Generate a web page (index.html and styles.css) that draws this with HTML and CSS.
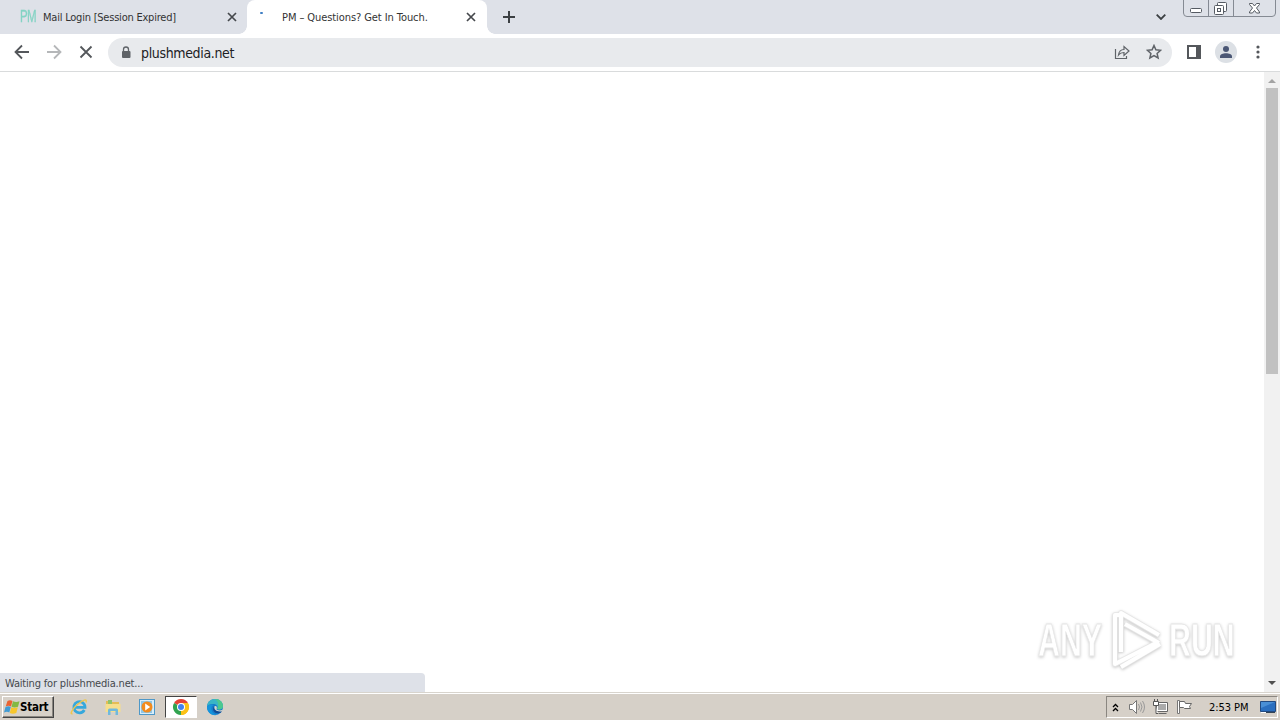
FILE: index.html
```html
<!DOCTYPE html>
<html lang="en">
<head>
  <meta charset="UTF-8" />
  <meta name="viewport" content="width=device-width, initial-scale=1.0" />
  <title>PM – Questions? Get In Touch.</title>
  <link rel="stylesheet" href="styles.css">
</head>
<body>
  <header class="tab-strip">
    <div class="tab">
      <span class="favicon">PM</span>
      <span class="tab-title title-login">Mail Login [Session Expired]</span>
      <svg class="tab-close" viewBox="0 0 10 10"><path d="M1 1l8 8M9 1l-8 8"/></svg>
    </div>
    <div class="tab active">
      <span class="spinner"></span>
      <span class="tab-title title-touch">PM – Questions? Get In Touch.</span>
      <svg class="tab-close" viewBox="0 0 10 10"><path d="M1 1l8 8M9 1l-8 8"/></svg>
    </div>
    <svg class="new-tab" viewBox="0 0 12 12"><path d="M6 0v12M0 6h12"/></svg>
    <svg class="tab-search" viewBox="0 0 10 6"><path d="M.7.7L5 5 9.300.7"/></svg>
    <div class="window-buttons">
      <svg width="97" height="17" viewBox="0 0 97 17">
        <path class="frame" d="M.5 0v13q0 3.500 3.500 3.500h85q3.500 0 3.500-3.500V0M25.500 0v16M50.500 0v16"/>
        <rect class="glyph" x="7.500" y="8.500" width="11" height="4" rx="1"/>
        <path class="glyph" d="M34.500 5.500v-2q0-1 1-1h7q1 0 1 1v7q0 1-1 1h-2"/>
        <rect class="glyph" x="31.500" y="5.500" width="9" height="9" rx="1"/>
        <rect class="glyph" x="34.500" y="8.500" width="3" height="3"/>
        <path class="glyph" d="M66.500 3.500h3l2 2.500 2-2.500h3v1l-3 3.500 3 4v1h-3l-2-2.500-2 2.500h-3v-1l3-4-3-3.500z"/>
      </svg>
    </div>
  </header>

  <nav class="toolbar">
    <svg class="nav-icon" viewBox="0 0 16 16"><path d="M15 8H2M8 1.500L1.500 8 8 14.500"/></svg>
    <svg class="nav-icon disabled" viewBox="0 0 16 16"><path d="M1 8h13M8 1.500L14.500 8 8 14.500"/></svg>
    <svg class="nav-icon" viewBox="0 0 16 16"><path d="M2.500 2.500l11 11M13.500 2.500l-11 11"/></svg>
    <div class="address-bar">
      <svg class="lock" viewBox="0 0 10 13"><path d="M2.500 6V3.500a2.500 2.500 0 0 1 5 0V6" fill="none" stroke="#5f6368" stroke-width="1.300"/><rect x="1" y="5" width="8.500" height="7" rx="1" fill="#5f6368"/></svg>
      <span class="url">plushmedia.net</span>
      <svg class="share" viewBox="0 0 16 16"><path d="M1.500 5v9.500h11V12M4.500 11c.5-4 2.500-5.500 5.500-5.500V2.500L15 7l-5 4.500v-3c-2.500 0-4 .5-5.500 2.500z"/></svg>
      <svg class="star" viewBox="0 0 16 16"><path d="M8 1.500l1.900 4.300 4.700.5-3.500 3.100 1 4.600L8 11.600 3.900 14l1-4.600L1.400 6.300l4.700-.5z"/></svg>
    </div>
    <svg class="side-panel" viewBox="0 0 14 14"><path d="M1 1h12v12H1z" fill="none" stroke="#54575b" stroke-width="2"/><path d="M9 1h4v12H9z" fill="#54575b"/></svg>
    <div class="avatar">
      <svg viewBox="0 0 12 12"><circle cx="6" cy="3" r="3"/><path d="M0 12v-1.500C0 8.500 3 7.300 6 7.300s6 1.200 6 3.200V12z"/></svg>
    </div>
    <svg class="menu" viewBox="0 0 4 14"><circle cx="2" cy="2" r="1.600"/><circle cx="2" cy="7" r="1.600"/><circle cx="2" cy="12" r="1.600"/></svg>
  </nav>

  <main class="page">
    <div class="status-bar">Waiting for plushmedia.net...</div>
    <div class="watermark">
      <span class="word">ANY</span>
      <svg viewBox="0 0 60 66">
        <path class="edge" d="M13 8H9v49l43-22M15 45V6l38 22M19 17l34 19M15 60l39-23"/>
        <path class="face" d="M13 8H9v49l43-22M15 45V6l38 22M19 17l34 19M15 60l39-23"/>
      </svg>
      <span class="word">RUN</span>
    </div>
    <div class="scrollbar">
      <svg class="arrow up" viewBox="0 0 8 4"><path d="M0 4l4-4 4 4z"/></svg>
      <div class="thumb"></div>
      <svg class="arrow down" viewBox="0 0 8 4"><path d="M0 0l4 4 4-4z"/></svg>
    </div>
  </main>

  <footer class="taskbar">
    <div class="start">
      <svg viewBox="0 0 16 16">
        <path d="M3.500 2q2.500-1.500 5 0L7 7.500q-2.500-1.500-5.300 0z" fill="#e96332"/>
        <path d="M9 2.300q3 1.500 6.500 0L14 7.700q-3.500 1.500-6.500 0z" fill="#83b943"/>
        <path d="M1.500 8q3-1.500 5.300 0L5.300 13.500q-2.300-1.500-5.300 0z" fill="#419bd4"/>
        <path d="M7.300 8.300q3 1.500 6.500 0L12.300 14q-3.500 1.500-6.500 0z" fill="#f7c62c"/>
      </svg>
      <span>Start</span>
    </div>
    <div class="quick-launch">
      <div class="app">
        <svg viewBox="0 0 18 18">
          <path d="M14.300 12A5.600 5.600 0 1 1 15 9.300H5" fill="none" stroke="#36a8dc" stroke-width="2.800"/>
          <path d="M2.500 15.500C-1 17 3 10 8 6s9.500-6 8-1.500" fill="none" stroke="#eec64d" stroke-width="1.400"/>
        </svg>
      </div>
      <div class="app">
        <svg viewBox="0 0 18 18">
          <path d="M2 3h5l1 1h7v10H2z" fill="#e4bd55"/>
          <path d="M4 2h4v4H4z" fill="#8ec36b"/>
          <path d="M1.500 6h15v8h-15z" fill="#f6df8c"/>
          <path d="M4 17v-5q0-1.500 1.500-1.500h7q1.500 0 1.500 1.500v5h-2.500v-4h-5v4z" fill="#70b9dc"/>
        </svg>
      </div>
      <div class="app">
        <svg viewBox="0 0 18 18">
          <rect x="1.500" y="1.500" width="15" height="15" fill="#d8edfa" stroke="#4e98c8"/>
          <rect x="3" y="3" width="11" height="12" fill="#8fc6e6"/>
          <circle cx="9" cy="9" r="5.500" fill="#f28b1d"/>
          <path d="M7.200 5.500l5 3.500-5 3.500z" fill="#fff"/>
        </svg>
      </div>
      <div class="app pressed">
        <svg viewBox="0 0 18 18">
          <path d="M9 9L2.070 5A8 8 0 0 1 15.930 5z" fill="#e54335"/>
          <path d="M9 9l6.930-4A8 8 0 0 1 9 17z" fill="#fbc116"/>
          <path d="M9 9v8A8 8 0 0 1 2.070 5z" fill="#31a350"/>
          <path d="M9 5h6.930A8 8 0 0 1 9 17l3.500-6z" fill="#fbc116"/>
          <circle cx="9" cy="9" r="4" fill="#fff"/>
          <circle cx="9" cy="9" r="3" fill="#4382ed"/>
        </svg>
      </div>
      <div class="app">
        <svg viewBox="0 0 18 18">
          <circle cx="9" cy="9" r="8" fill="#167bc9"/>
          <path d="M1 8C2 3 5 1 9 1c5 0 8 3.500 8 7 0 3-3 4-6 3 2-3-1-5-4-5-3 0-5 1-6 2z" fill="#39b5c6"/>
          <path d="M9 1c5 0 8 3.500 8 7 0 3-3 4-6 3 1-2 3-6-2-10z" fill="#4cc88f"/>
          <path d="M6 8c-2 4 1 8 5 9-6 1-10-3-10-8 1-3 5-3 7-2z" fill="#1594dc"/>
          <path d="M8 8c-1 4 3 6 8 5l-1 1.500C10 17 5 13 8 8z" fill="#124b94"/>
          <path d="M8.500 8.300c2-1 3 1 2 3 1 1.500 4 1.500 6.500.2l-.8 1.700c-4.500.8-8.500-.7-7.700-4.900z" fill="#d8d4cb"/>
        </svg>
      </div>
    </div>
    <div class="tray">
      <svg class="chevrons" viewBox="0 0 7 9"><path d="M1 4l2.500-2.500L6 4M1 8l2.500-2.500L6 8"/></svg>
      <svg class="tray-icon" viewBox="0 0 17 16">
        <path d="M1.500 5.500h3l4-4v13l-4-4h-3z" fill="#fff" stroke="#777"/>
        <path d="M10.500 5q2 3 0 6M12.500 3.500q3 4.500 0 9M14.500 2q4 6 0 12" fill="none" stroke="#999"/>
      </svg>
      <svg class="tray-icon" viewBox="0 0 17 16">
        <path d="M4.500 3.500h11v9h-11z" fill="#fff" stroke="#666"/>
        <path d="M6 5h8v6H6z" fill="#aaa"/>
        <path d="M6.500 14.500h8" stroke="#666"/>
        <path d="M1.500 2.500h5v4h-5zM2.500 0v2M5.500 0v2M4 7v7.500h2" fill="#fff" stroke="#555"/>
      </svg>
      <svg class="tray-icon" viewBox="0 0 17 16">
        <path d="M1.500 1.500h2v13h-2z" fill="#fff" stroke="#777"/>
        <path d="M3.500 2.500h5l1 2h6l-2 3 1 2h-6l-1-1h-4z" fill="#fff" stroke="#666"/>
      </svg>
      <span class="clock">2:53 PM</span>
      <svg class="desktop" viewBox="0 0 16 14">
        <path d="M.5 1.500h15v10H.5z" fill="#2b6fbf" stroke="#234a80"/>
        <path d="M1 2h14L1 8z" fill="#4a8fd5"/>
        <path d="M1 12.500h5" stroke="#fff"/>
        <path d="M6 12.500h9" stroke="#345"/>
      </svg>
    </div>
  </footer>
</body>
</html>
```

FILE: styles.css
```css
:root {
  --strip: #dee1e8;
  --grey: #5f6368;
  --taskbar: #d6d0c8;
}

* {
  box-sizing: border-box;
  margin: 0;
  padding: 0;
}

body {
  display: flex;
  flex-direction: column;
  width: 100%;
  height: 100vh;
  overflow: hidden;
  background: #fff;
  color: #333;
  font-family: "DejaVu Sans Condensed", "DejaVu Sans", sans-serif;
  font-stretch: condensed;
  font-size: 11px;
}

svg {
  display: block;
  flex: none;
}

.tab-strip {
  display: flex;
  align-items: center;
  height: 34px;
  background: var(--strip);
}

.tab {
  display: flex;
  align-items: center;
  width: 247px;
  height: 34px;
  padding: 0 10px 0 20px;
}

.tab.active {
  position: relative;
  width: 240px;
  padding: 0 11px 0 13px;
  background: #fff;
  border-radius: 8px 8px 0 0;
}

/* curved feet of the selected tab */
.tab.active::before,
.tab.active::after {
  content: "";
  position: absolute;
  bottom: 0;
  width: 8px;
  height: 8px;
}

.tab.active::before {
  left: -8px;
  background: radial-gradient(circle at 0 0, transparent 7.500px, #fff 8px);
}

.tab.active::after {
  right: -8px;
  background: radial-gradient(circle at 100% 0, transparent 7.500px, #fff 8px);
}

.favicon {
  width: 23px;
  color: #84d3c4;
  font-family: "Liberation Sans", sans-serif;
  font-size: 16px;
  letter-spacing: -1px;
  transform: scaleX(.72);
  transform-origin: left;
  white-space: nowrap;
  -webkit-text-stroke: .3px #84d3c4;
}

.spinner {
  width: 22px;
  height: 11px;
}

.spinner::before {
  content: "";
  display: block;
  width: 3px;
  height: 2px;
  border-radius: 1px;
  background: #3f7fc4;
}

.tab-title {
  white-space: nowrap;
}

.title-login {
  letter-spacing: -.22px;
}

.title-touch {
  letter-spacing: -.08px;
}

.tab-close {
  width: 10px;
  height: 10px;
  margin-left: auto;
  fill: none;
  stroke: #45484c;
  stroke-width: 1.700;
}

.new-tab {
  width: 12px;
  height: 12px;
  margin-left: 16px;
  stroke: #3c4043;
  stroke-width: 2;
}

.tab-search {
  width: 10px;
  height: 6px;
  margin-left: auto;
  fill: none;
  stroke: #3c4043;
  stroke-width: 1.800;
}

.window-buttons {
  align-self: flex-start;
  margin-left: 17px;
}

.frame {
  fill: none;
  stroke: #858a93;
}

.glyph {
  fill: #fff;
  stroke: #555a62;
}

.toolbar {
  display: flex;
  align-items: center;
  height: 38px;
  padding: 0 20px 1px 14px;
  border-bottom: 1px solid #d9dbdc;
}

.nav-icon {
  width: 16px;
  height: 16px;
  margin-right: 16px;
  fill: none;
  stroke: #54575b;
  stroke-width: 1.800;
}

.nav-icon.disabled {
  stroke: #b5b7b9;
}

.nav-icon:nth-child(3) {
  margin-right: 14px;
}

.address-bar {
  display: flex;
  align-items: center;
  flex: 1;
  height: 29px;
  padding: 0 10px 0 13px;
  background: #e8eaed;
  border-radius: 15px;
}

.lock {
  width: 10px;
  height: 13px;
}

.url {
  margin-left: 10px;
  padding-top: 1px;
  color: #202124;
  font-size: 14px;
  letter-spacing: -.35px;
}

.share,
.star {
  width: 16px;
  height: 16px;
  margin-left: auto;
  fill: none;
  stroke: var(--grey);
  stroke-width: 1.200;
}

.star {
  margin-left: 16px;
  stroke-width: 1.500;
}

.side-panel {
  width: 14px;
  height: 14px;
  margin-left: 15px;
}

.avatar {
  display: flex;
  align-items: center;
  justify-content: center;
  width: 22px;
  height: 22px;
  margin-left: 14px;
  border-radius: 50%;
  background: #dce0e5;
}

.avatar svg {
  width: 12px;
  height: 12px;
  fill: #4a5674;
}

.menu {
  width: 4px;
  height: 14px;
  margin-left: 19px;
  fill: #54575b;
}

.page {
  position: relative;
  display: flex;
  align-items: flex-end;
  justify-content: space-between;
  flex: 1;
  min-height: 0;
}

.status-bar {
  width: 425px;
  height: 19px;
  padding: 1px 0 0 5px;
  background: var(--strip);
  border-radius: 0 4px 0 0;
  color: #45484c;
  letter-spacing: -.18px;
  line-height: 20px;
}

.scrollbar {
  display: flex;
  flex-direction: column;
  align-items: center;
  width: 16px;
  height: 100%;
  padding: 7px 0;
  background: #f1f1f1;
}

.arrow {
  width: 8px;
  height: 4px;
}

.up {
  fill: #a3a3a3;
}

.down {
  margin-top: auto;
  fill: #505050;
}

.thumb {
  width: 12px;
  height: 286px;
  margin-top: 5px;
  background: #c1c1c1;
}

.watermark {
  position: absolute;
  right: 46px;
  bottom: 19px;
  display: flex;
  align-items: center;
  justify-content: space-between;
  width: 196px;
  height: 66px;
  filter: drop-shadow(0 1px 1.500px rgba(0, 0, 0, .22));
}

.watermark svg {
  width: 60px;
  height: 66px;
}

.edge,
.face {
  fill: none;
  stroke: #e6e6e6;
  stroke-width: 5.500;
  stroke-linejoin: round;
}

.face {
  stroke: #fff;
  stroke-width: 4;
}

.word {
  width: 65px;
  color: #fff;
  font-family: "Liberation Sans Narrow", "Liberation Sans", sans-serif;
  font-size: 46px;
  font-weight: bold;
  line-height: 60px;
  transform: scaleX(.66);
  transform-origin: left;
  white-space: nowrap;
  -webkit-text-stroke: .8px #e6e6e6;
}

.taskbar {
  display: flex;
  align-items: center;
  height: 28px;
  padding: 3px 2px 2px;
  border-top: 1px solid #d8d4cd;
  box-shadow: inset 0 1px #fff;
  background: var(--taskbar);
}

.start {
  display: flex;
  align-items: center;
  width: 52px;
  height: 22px;
  padding-left: 1px;
  border: 1px solid;
  border-color: #fff #444 #444 #fff;
  box-shadow: inset -1px -1px #8a8680;
  color: #000;
  font-size: 11.500px;
  font-weight: bold;
  letter-spacing: -.25px;
}

.start svg {
  width: 16px;
  height: 16px;
}

.quick-launch {
  display: flex;
  gap: 2px;
  margin-left: 9px;
}

.app {
  display: flex;
  align-items: center;
  justify-content: center;
  width: 32px;
  height: 22px;
}

.app svg {
  width: 18px;
  height: 18px;
}

.app.pressed {
  background: #fff;
  border: 1px solid;
  border-color: #444 #fff #fff #444;
}

.tray {
  display: flex;
  align-items: center;
  width: 172px;
  height: 22px;
  margin-left: auto;
  padding: 0 1px 0 5px;
  border: 1px solid;
  border-color: #8a8680 #fff #fff #8a8680;
}

.chevrons {
  width: 7px;
  height: 9px;
  margin-right: 9px;
  fill: none;
  stroke: #000;
  stroke-width: 1.300;
}

.tray-icon {
  width: 17px;
  height: 16px;
  margin-right: 7px;
}

.clock {
  margin-left: 9px;
  color: #000;
  letter-spacing: -.05px;
  white-space: nowrap;
}

.desktop {
  width: 16px;
  height: 14px;
  margin-left: auto;
}
```
